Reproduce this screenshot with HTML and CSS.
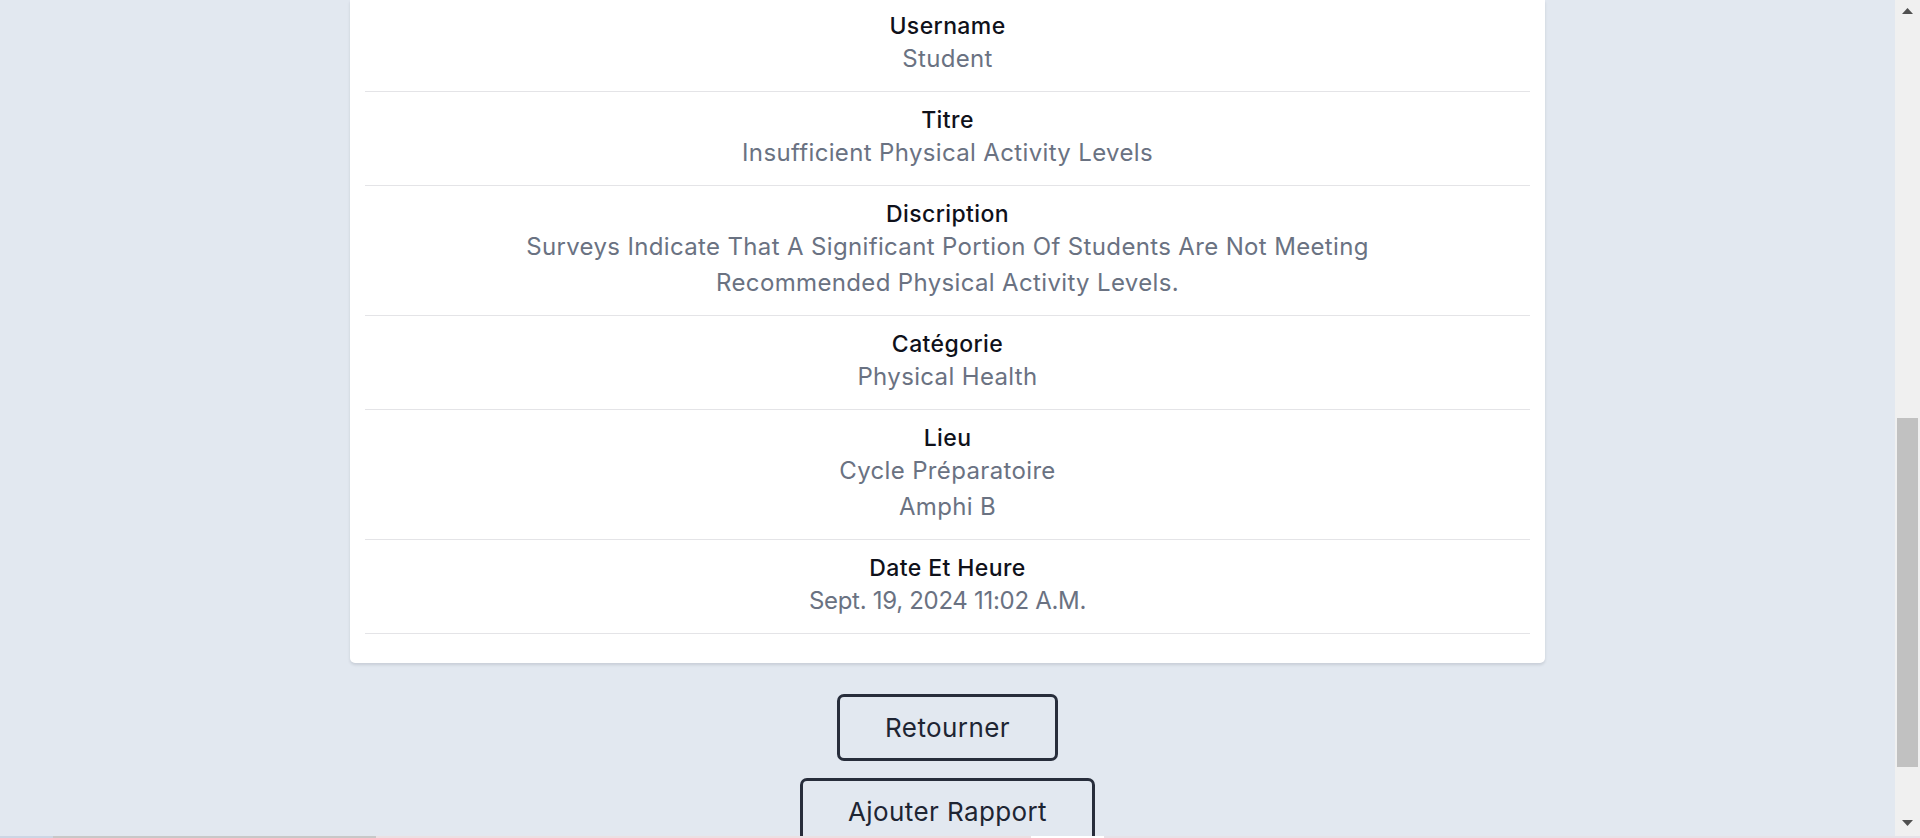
FILE: index.html
```html
<!DOCTYPE html>
<html lang="fr">
<head>
<meta charset="utf-8">
<title>Rapport</title>
<link rel="stylesheet" href="styles.css">
</head>
<body>
<div class="window">
  <div class="viewport">
    <main class="content">
      <section class="card">
        <div class="row">
          <div class="label">Username</div>
          <div class="value">Student</div>
        </div>
        <div class="row">
          <div class="label">Titre</div>
          <div class="value">Insufficient Physical Activity Levels</div>
        </div>
        <div class="row">
          <div class="label">Discription</div>
          <div class="value value-wrap">Surveys Indicate That A Significant Portion Of Students Are Not Meeting Recommended Physical Activity Levels.</div>
        </div>
        <div class="row">
          <div class="label">Catégorie</div>
          <div class="value">Physical Health</div>
        </div>
        <div class="row">
          <div class="label">Lieu</div>
          <div class="value">Cycle Préparatoire</div>
          <div class="value">Amphi B</div>
        </div>
        <div class="row">
          <div class="label">Date Et Heure</div>
          <div class="value value-date">Sept. 19, 2024 11:02 A.M.</div>
        </div>
      </section>
      <div class="actions">
        <button class="btn" type="button">Retourner</button>
        <button class="btn" type="button">Ajouter Rapport</button>
      </div>
    </main>
    <div class="scrollbar">
      <div class="sb-btn sb-up">
        <svg width="11" height="6" viewBox="0 0 11 6"><polygon points="5.5,0 11,6 0,6" fill="#505050"/></svg>
      </div>
      <div class="sb-track"><div class="sb-thumb"></div></div>
      <div class="sb-btn sb-down">
        <svg width="11" height="6" viewBox="0 0 11 6"><polygon points="0,0 11,0 5.5,6" fill="#505050"/></svg>
      </div>
    </div>
  </div>
  <div class="strip">
    <span class="seg seg-a"></span>
    <span class="seg seg-b"></span>
    <span class="seg seg-c"></span>
    <span class="seg seg-d"></span>
    <span class="seg seg-e"></span>
  </div>
</div>
</body>
</html>
```
FILE: styles.css
```css
* { box-sizing: border-box; }

html, body {
  margin: 0;
  padding: 0;
  height: 838px;
  overflow: hidden;
  background: #e2e8f0;
  font-family: "Inter", "Noto Sans", sans-serif;
}

.window {
  display: flex;
  flex-direction: column;
  height: 838px;
}

.viewport {
  flex: 1;
  display: flex;
  min-height: 0;
}

.content {
  flex: 1;
  overflow: hidden;
  display: flex;
  flex-direction: column;
  align-items: center;
}

.card {
  width: 1195px;
  background: #ffffff;
  border-radius: 0 0 5px 5px;
  box-shadow: 0 2px 3px rgba(15, 23, 42, 0.12);
  padding: 0 15px 29px;
}

.row {
  padding: 13px 0 14px;
  border-bottom: 1px solid #e4e4e7;
  text-align: center;
}

.row:first-child {
  padding-top: 11px;
}

.label {
  font-size: 23px;
  line-height: 30px;
  font-weight: 500;
  letter-spacing: 0.4px;
  color: #0f111a;
}

.value {
  font-size: 24px;
  line-height: 36px;
  font-weight: 400;
  letter-spacing: 0.35px;
  color: #6a7282;
}

.value-wrap {
  max-width: 900px;
  margin: 0 auto;
}

.value-date {
  letter-spacing: -0.3px;
}

.actions {
  display: flex;
  flex-direction: column;
  align-items: center;
  gap: 17px;
  margin-top: 31px;
}

.btn {
  font-family: inherit;
  font-size: 26px;
  line-height: 37px;
  letter-spacing: 0.4px;
  color: #1e2533;
  background: transparent;
  border: 3px solid #272d3b;
  border-radius: 7px;
  padding: 12px 45px;
}

.scrollbar {
  width: 25px;
  background: #f0f0f0;
  display: flex;
  flex-direction: column;
}

.sb-btn {
  display: flex;
  justify-content: center;
}

.sb-up {
  height: 21px;
  padding-top: 8px;
}

.sb-down {
  height: 26px;
  padding-top: 10px;
}

.sb-track {
  flex: 1;
}

.sb-thumb {
  margin: 397px 2px 0 2px;
  height: 349px;
  background: #c1c1c1;
}

.strip {
  height: 2px;
  display: flex;
}

.seg { display: block; height: 2px; }
.seg-a { width: 53px; background: #cdd6e4; }
.seg-b { width: 323px; background: #c8c8c8; }
.seg-c { width: 655px; background: #ebe0e3; }
.seg-d { width: 73px; background: #ffffff; }
.seg-e { flex: 1; background: #e6e2e8; }
```
